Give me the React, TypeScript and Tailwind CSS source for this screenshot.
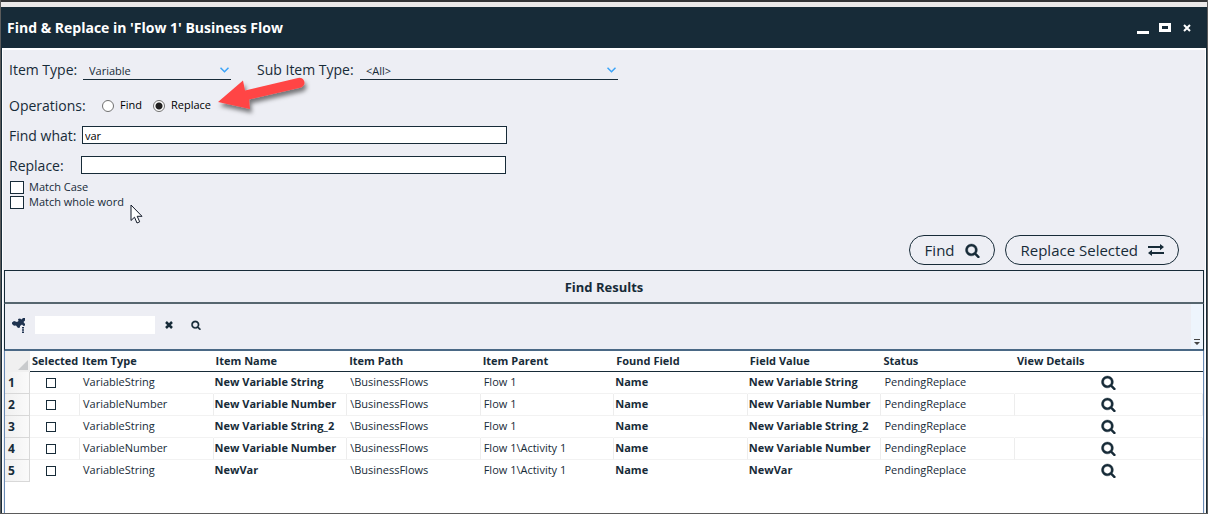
import React from "react";

const columns = [
  "Item Type",
  "Item Name",
  "Item Path",
  "Item Parent",
  "Found Field",
  "Field Value",
  "Status",
  "View Details",
];

const rows = [
  { type: "VariableString", name: "New Variable String", parent: "Flow 1" },
  { type: "VariableNumber", name: "New Variable Number", parent: "Flow 1" },
  { type: "VariableString", name: "New Variable String_2", parent: "Flow 1" },
  { type: "VariableNumber", name: "New Variable Number", parent: "Flow 1\\Activity 1" },
  { type: "VariableString", name: "NewVar", parent: "Flow 1\\Activity 1" },
];

function SearchIcon({ className }: { className: string }) {
  return (
    <svg viewBox="0 0 1664 1792" className={className} fill="currentColor" stroke="currentColor" strokeWidth="50" aria-hidden="true">
      <path d="M1152 832q0-185-131.5-316.5t-316.5-131.5-316.5 131.5-131.5 316.5 131.5 316.5 316.5 131.5 316.5-131.5 131.5-316.5zm512 832q0 52-38 90t-90 38q-54 0-90-38l-343-342q-179 124-399 124-143 0-273.5-55.5t-225-150-150-225-55.5-273.5 55.5-273.5 150-225 225-150 273.5-55.5 273.5 55.5 225 150 150 225 55.5 273.5q0 220-124 399l343 343q37 37 37 90z" />
    </svg>
  );
}

function ExchangeIcon() {
  return (
    <svg viewBox="0 0 16 12" className="h-3 w-4" fill="currentColor" aria-hidden="true">
      <path d="M0 2.100h12V0l4 3.100-4 3.100V4.100H0zM16 9.900H4V12L0 8.900l4-3.100v2.100h12z" />
    </svg>
  );
}

function PinIcon() {
  return (
    <svg viewBox="0 0 14 17" className="h-[17px] w-3.5" fill="#1f3350" aria-hidden="true">
      <path d="M0 5.500L2 4l3 1 1.500-1-.5-2 2-.5 1.500 1L11 1h2v2.500L11.500 5 13 7v1.500L11.500 9 10 7.500 8 9v1.500L6 11 4 8.500 2 8.800 0 7z" />
      <path d="M10 10h2v1.500h-2zM10 12.300h2v1.500h-2zM10 14.600h2v1.500h-2z" />
    </svg>
  );
}

function DropDown({ id, value, className }: { id: string; value: string; className: string }) {
  return (
    <div className={`relative h-[18px] border-b border-[#172b38] ${className}`}>
      <select id={id} className="block h-full w-full appearance-none bg-transparent pl-1.5 text-[11px] leading-4 outline-none">
        <option>{value}</option>
      </select>
      <svg viewBox="0 0 9 6" className="pointer-events-none absolute top-[5px] right-0.5 h-1.5 w-[9px]" fill="none" stroke="#3ba3f8" strokeWidth="1.500" aria-hidden="true">
        <path d="M.5.700l4 4 4-4" />
      </svg>
    </div>
  );
}

export default function App() {
  return (
    <div className="relative flex min-h-screen flex-col border-x border-b border-[#5b5b5b] bg-[#edeef4] font-['Open_Sans','Noto_Sans',sans-serif] text-[#172b38]">
      <div className="h-[2px] bg-[#333436]" />
      <div className="h-[5px] bg-[#ebe9e9]" />
      <header className="flex h-[41px] items-center justify-between bg-[#172b38] pr-3.5 pl-1.5 text-white">
        <h1 className="text-[14px] font-bold">Find &amp; Replace in 'Flow 1' Business Flow</h1>
        <div className="flex items-center gap-2.5">
          <button aria-label="Minimize" className="flex h-3 w-3 items-end">
            <span className="h-[3px] w-full bg-white" />
          </button>
          <button aria-label="Maximize" className="h-[9px] w-3 border-[3px] border-white" />
          <button aria-label="Close" className="flex w-3 justify-center">
            <svg viewBox="0 0 8 8" className="size-2" stroke="currentColor" strokeWidth="2" aria-hidden="true">
              <path d="M1 1l6 6M7 1L1 7" />
            </svg>
          </button>
        </div>
      </header>

      <main className="flex flex-1 flex-col border-x border-[#172b38]">
        <div className="flex flex-1 flex-col border-x border-t-2 border-white">
          <form className="flex flex-col pl-1.5">
            <div className="mt-3 flex h-[18px] items-start">
              <label htmlFor="type" className="w-[74px] text-[14px] leading-4">Item Type:</label>
              <DropDown id="type" value="Variable" className="w-[148px]" />
              <label htmlFor="sub" className="ml-[26px] w-[103px] text-[14px] leading-4">Sub Item Type:</label>
              <DropDown id="sub" value="<All>" className="w-[258px]" />
            </div>

            <fieldset className="mt-[15px] flex h-[18px] items-center text-[11px] text-black">
              <span className="w-[93px] text-[14px] text-[#172b38]">Operations:</span>
              <label className="flex w-[51px] items-center gap-[6px]">
                <input type="radio" name="op" className="size-3 appearance-none rounded-full border border-[#707070] bg-white checked:bg-[radial-gradient(circle,#212121_3px,#ffffff_4px)]" />
                Find
              </label>
              <label className="flex items-center gap-[6px]">
                <input
                  type="radio"
                  name="op"
                  defaultChecked
                  className="size-3 appearance-none rounded-full border border-[#707070] bg-white checked:bg-[radial-gradient(circle,#212121_3px,#ffffff_4px)]"
                />
                Replace
              </label>
            </fieldset>

            <div className="mt-[13px] flex h-[18px] items-center">
              <label htmlFor="find" className="w-[73px] text-[14px]">Find what:</label>
              <input id="find" defaultValue="var" className="h-[18px] w-[425px] border border-[#172b38] bg-white px-0.5 text-[11px] text-black outline-none" />
            </div>
            <div className="mt-3 flex h-[18px] items-center">
              <label htmlFor="replace" className="w-[72px] text-[14px]">Replace:</label>
              <input id="replace" className="h-[18px] w-[425px] border border-[#172b38] bg-white px-0.5 text-[11px] text-black outline-none" />
            </div>

            <div className="mt-1.5 flex flex-col items-start text-[11px]">
              <label className="flex h-[15px] items-center gap-[5px]">
                <input type="checkbox" className="ml-px h-[13px] w-3.5 appearance-none border border-[#172b38] bg-white checked:bg-[#172b38]" />
                Match Case
              </label>
              <label className="flex h-[15px] items-center gap-[5px]">
                <input type="checkbox" className="ml-px h-[13px] w-3.5 appearance-none border border-[#172b38] bg-white checked:bg-[#172b38]" />
                Match whole word
              </label>
            </div>

            <div className="mt-[25px] flex justify-end gap-2.5 pr-[26px] text-[15px]">
              <button type="button" className="flex h-[30px] items-center gap-2.5 rounded-full border border-[#172b38] pr-3.5 pl-[15px]">
                Find
                <SearchIcon className="size-[15px]" />
              </button>
              <button type="button" className="flex h-[30px] items-center gap-2.5 rounded-full border border-[#172b38] pr-3.5 pl-[15px]">
                Replace Selected
                <ExchangeIcon />
              </button>
            </div>
          </form>

          <section className="mx-px mt-[5px] flex flex-1 flex-col">
            <h2 className="flex h-[34px] items-center justify-center border border-b-2 border-[#172b38] border-b-[#56666f] pt-0.5 text-[13px] font-bold">
              Find Results
            </h2>
            <div className="flex h-[47px] border-x border-b-2 border-[#172b38] border-b-[#4a6885]">
              <div className="flex flex-1 items-center pb-[3px] pl-[7px]">
                <PinIcon />
                <input aria-label="Filter results" className="ml-[9px] h-[18px] w-[120px] bg-white px-1 text-[11px] outline-none" />
                <button aria-label="Clear" className="ml-2.5">
                  <svg viewBox="0 0 8 8" className="size-2" stroke="currentColor" strokeWidth="2.500" aria-hidden="true">
                    <path d="M1 1l6 6M7 1L1 7" />
                  </svg>
                </button>
                <button aria-label="Search" className="ml-[18px]">
                  <SearchIcon className="size-2.5" />
                </button>
              </div>
              <button aria-label="More tools" className="flex w-3 items-end justify-center bg-[#eef5fd] pb-1">
                <svg viewBox="0 0 6 6" className="size-1.5" fill="#444" aria-hidden="true">
                  <path d="M0 0h6v1H0zM0 3h6L3 6z" />
                </svg>
              </button>
            </div>

            <div className="flex-1 border-x border-[#6a8bb5] bg-white">
              <table className="w-full table-fixed border-separate border-spacing-0 text-[11px]">
                <colgroup>
                  <col className="w-[25px]" />
                  <col className="w-[50px]" />
                  {columns.slice(0, 7).map((c) => (
                    <col key={c} className="w-[11.150%]" />
                  ))}
                  <col />
                </colgroup>
                <thead>
                  <tr className="h-[21px] text-left whitespace-nowrap">
                    <th className="bg-[#f0f0f0] p-0 align-bottom">
                      <svg viewBox="0 0 10 10" className="mr-0.5 mb-0.5 ml-auto size-2.5" fill="#c8cacc" aria-hidden="true">
                        <path d="M10 0v10H0z" />
                      </svg>
                    </th>
                    <th className="border-b border-[#172b38] p-0 pt-px pl-0.5">Selected</th>
                    {columns.map((c) => (
                      <th key={c} className="border-b border-[#172b38] p-0 pt-px pl-0.5">{c}</th>
                    ))}
                  </tr>
                </thead>
                <tbody>
                  {rows.map((r, i) => (
                    <tr
                      key={i}
                      className="h-[22px] whitespace-nowrap [&>td]:border-r [&>td]:border-b [&>td]:border-r-transparent [&>td]:border-b-[#f2f2f2] [&>td]:p-0 even:[&>td]:border-r-[#ededed] last:[&>td]:border-b-transparent"
                    >
                      <th className="border-r border-b border-[#d8d8d8] bg-linear-to-r from-[#f0f0f0] to-[#fafafa] p-0 pl-[3px] text-left text-[12px]">
                        {i + 1}
                      </th>
                      <td>
                        <input type="checkbox" aria-label={`Select row ${i + 1}`} className="ml-4 block size-2.5 appearance-none border border-[#172b38] checked:bg-[#172b38]" />
                      </td>
                      <td><span className="pl-[3px]">{r.type}</span></td>
                      <td className="font-bold"><span className="pl-px">{r.name}</span></td>
                      <td><span className="pl-[3px]">\BusinessFlows</span></td>
                      <td><span className="pl-[3px]">{r.parent}</span></td>
                      <td className="font-bold"><span className="pl-px">Name</span></td>
                      <td className="font-bold"><span className="pl-px">{r.name}</span></td>
                      <td><span className="pl-[3px]">PendingReplace</span></td>
                      <td>
                        <button aria-label="View details" className="mx-auto block">
                          <SearchIcon className="size-[15px]" />
                        </button>
                      </td>
                    </tr>
                  ))}
                </tbody>
              </table>
            </div>
          </section>
        </div>
      </main>

      <svg viewBox="0 0 100 50" className="pointer-events-none absolute top-[73px] left-[213px] h-[50px] w-[100px]" aria-hidden="true">
        <defs>
          <filter id="soft" x="-20%" y="-20%" width="150%" height="160%">
            <feDropShadow dx="2" dy="4" stdDeviation="2" floodColor="#000" floodOpacity="0.500" />
          </filter>
        </defs>
        <path d="M4 29L29 7.500l2 10 53-12.500a4.900 4.900 0 0 1 3 9.500L35 26.500l1 9.500z" fill="#ff4545" filter="url(#soft)" />
      </svg>
      <svg viewBox="0 0 13 20" className="pointer-events-none absolute top-[204px] left-[129px] h-5 w-[13px]" aria-hidden="true">
        <path d="M1 1v15.500l3.500-3.300L7 19l2.700-1.200-2.500-5.500H12z" fill="#fff" stroke="#111827" />
      </svg>
    </div>
  );
}
